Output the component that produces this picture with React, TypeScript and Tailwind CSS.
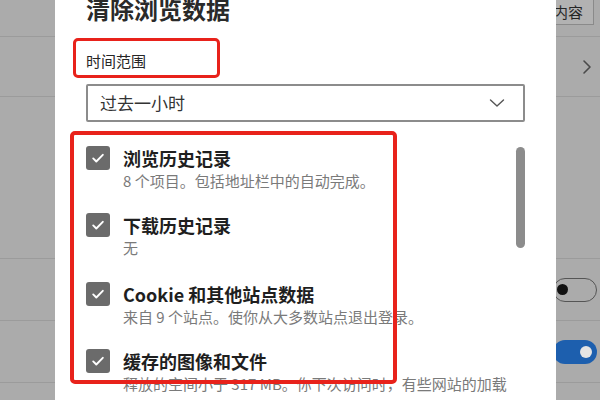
import React from "react";

function Strip({ side }: { side: "left" | "right" }) {
  const right = side === "right";
  return (
    <div className="flex flex-col h-full overflow-hidden bg-[#ababab]">
      <div className="h-[37px] shrink-0 border-b border-[#9b9b9b] flex justify-end items-start">
        {right && (
          <div className="h-[26px] -mt-[1px] mr-[6px] shrink-0 border border-[#8a8a8a] bg-[#b2b2b2] flex items-center pl-[40px] pr-[10px] text-[15px] leading-[18px] text-[#262626] whitespace-nowrap">
            删除内容
          </div>
        )}
      </div>
      <div className="h-[60px] shrink-0 border-b border-[#9b9b9b] flex items-center justify-end pr-[8px]">
        {right && (
          <svg width="10" height="16" viewBox="0 0 10 16" fill="none">
            <path d="M2 2l6 6-6 6" stroke="#4a4a4a" strokeWidth="1.6" strokeLinecap="round" strokeLinejoin="round" />
          </svg>
        )}
      </div>
      <div className="h-[162px] shrink-0 border-b border-[#9b9b9b]" />
      <div className="h-[62px] shrink-0 border-b border-[#9b9b9b] flex items-center justify-end pr-[3px]">
        {right && (
          <div className="w-[44px] h-[24px] shrink-0 rounded-full border border-[#555] flex items-center pl-[3px]">
            <div className="w-[11px] h-[11px] rounded-full bg-[#111]" />
          </div>
        )}
      </div>
      <div className="h-[62px] shrink-0 border-b border-[#9b9b9b] flex items-center justify-end pr-[3px]">
        {right && (
          <div className="w-[44px] h-[24px] shrink-0 rounded-full bg-[#1d5fae] flex items-center justify-end pr-[5px]">
            <div className="w-[12px] h-[12px] rounded-full bg-[#e4e4e4]" />
          </div>
        )}
      </div>
      <div className="flex-1" />
    </div>
  );
}

function Check() {
  return (
    <div className="w-6 h-6 shrink-0 rounded-[3px] bg-[#6b6b6b] flex items-center justify-center">
      <svg width="16" height="16" viewBox="0 0 16 16" fill="none">
        <path d="M3.2 8.4l3.1 3.1L12.8 4.8" stroke="white" strokeWidth="1.9" strokeLinecap="round" strokeLinejoin="round" />
      </svg>
    </div>
  );
}

const rows = [
  { t: "浏览历史记录", s: "8 个项目。包括地址栏中的自动完成。", m: "mt-0" },
  { t: "下载历史记录", s: "无", m: "mt-[21px]" },
  { t: "Cookie 和其他站点数据", s: "来自 9 个站点。使你从大多数站点退出登录。", m: "mt-[23px]" },
  { t: "缓存的图像和文件", s: "释放的空间小于 317 MB。你下次访问时，有些网站的加载", m: "mt-[21px]" },
];

export default function App() {
  return (
    <div className="relative w-[600px] h-[400px] overflow-hidden flex bg-white font-['Noto_Sans_CJK_SC','Noto_Sans',sans-serif]">
      <div className="w-[55px] shrink-0 h-full">
        <Strip side="left" />
      </div>
      <div className="w-[501px] shrink-0 h-full bg-white flex flex-col overflow-hidden">
        <div className="shrink-0 -mt-[3px] pl-[31px] text-[24px] leading-[24px] font-bold text-[#2a2a2a] whitespace-nowrap">
          清除浏览数据
        </div>
        <div className="shrink-0 mt-[30px] pl-[31px] text-[15px] leading-[20px] text-[#262626]">时间范围</div>
        <div className="shrink-0 mt-[13px] ml-[31px] w-[439px] h-[38px] border-2 border-[#8c8c8c] rounded-[2px] flex items-center justify-between pl-[12px] pr-[18px]">
          <span className="text-[17px] leading-[22px] text-[#333]">过去一小时</span>
          <svg width="16" height="10" viewBox="0 0 16 10" fill="none">
            <path d="M1.5 2l6.5 6 6.5-6" stroke="#555" strokeWidth="1.4" strokeLinecap="round" strokeLinejoin="round" />
          </svg>
        </div>
        <div className="shrink-0 mt-[24px] flex">
          <div className="ml-[31px] flex flex-col">
            {rows.map((r) => (
              <div key={r.t} className={`shrink-0 flex gap-[13px] ${r.m}`}>
                <Check />
                <div className="w-[392px] flex flex-col">
                  <div className="text-[18px] leading-[24px] font-bold text-[#1f1f1f] whitespace-nowrap">{r.t}</div>
                  <div className="text-[15px] leading-[22px] text-[#7a7a7a] whitespace-nowrap">{r.s}</div>
                </div>
              </div>
            ))}
          </div>
          <div className="shrink-0 ml-[1px] mt-[1px] w-[9px] h-[101px] rounded-full bg-[#8c8c8c]" />
        </div>
      </div>
      <div className="w-[44px] shrink-0 h-full">
        <Strip side="right" />
      </div>
      <div className="absolute left-[73px] top-[38px] w-[147px] h-[40px] border-[3px] border-[#e8221b] rounded-[5px]" />
      <div className="absolute left-[70px] top-[131px] w-[327px] h-[253px] border-[4px] border-[#e8221b] rounded-[5px]" />
    </div>
  );
}
